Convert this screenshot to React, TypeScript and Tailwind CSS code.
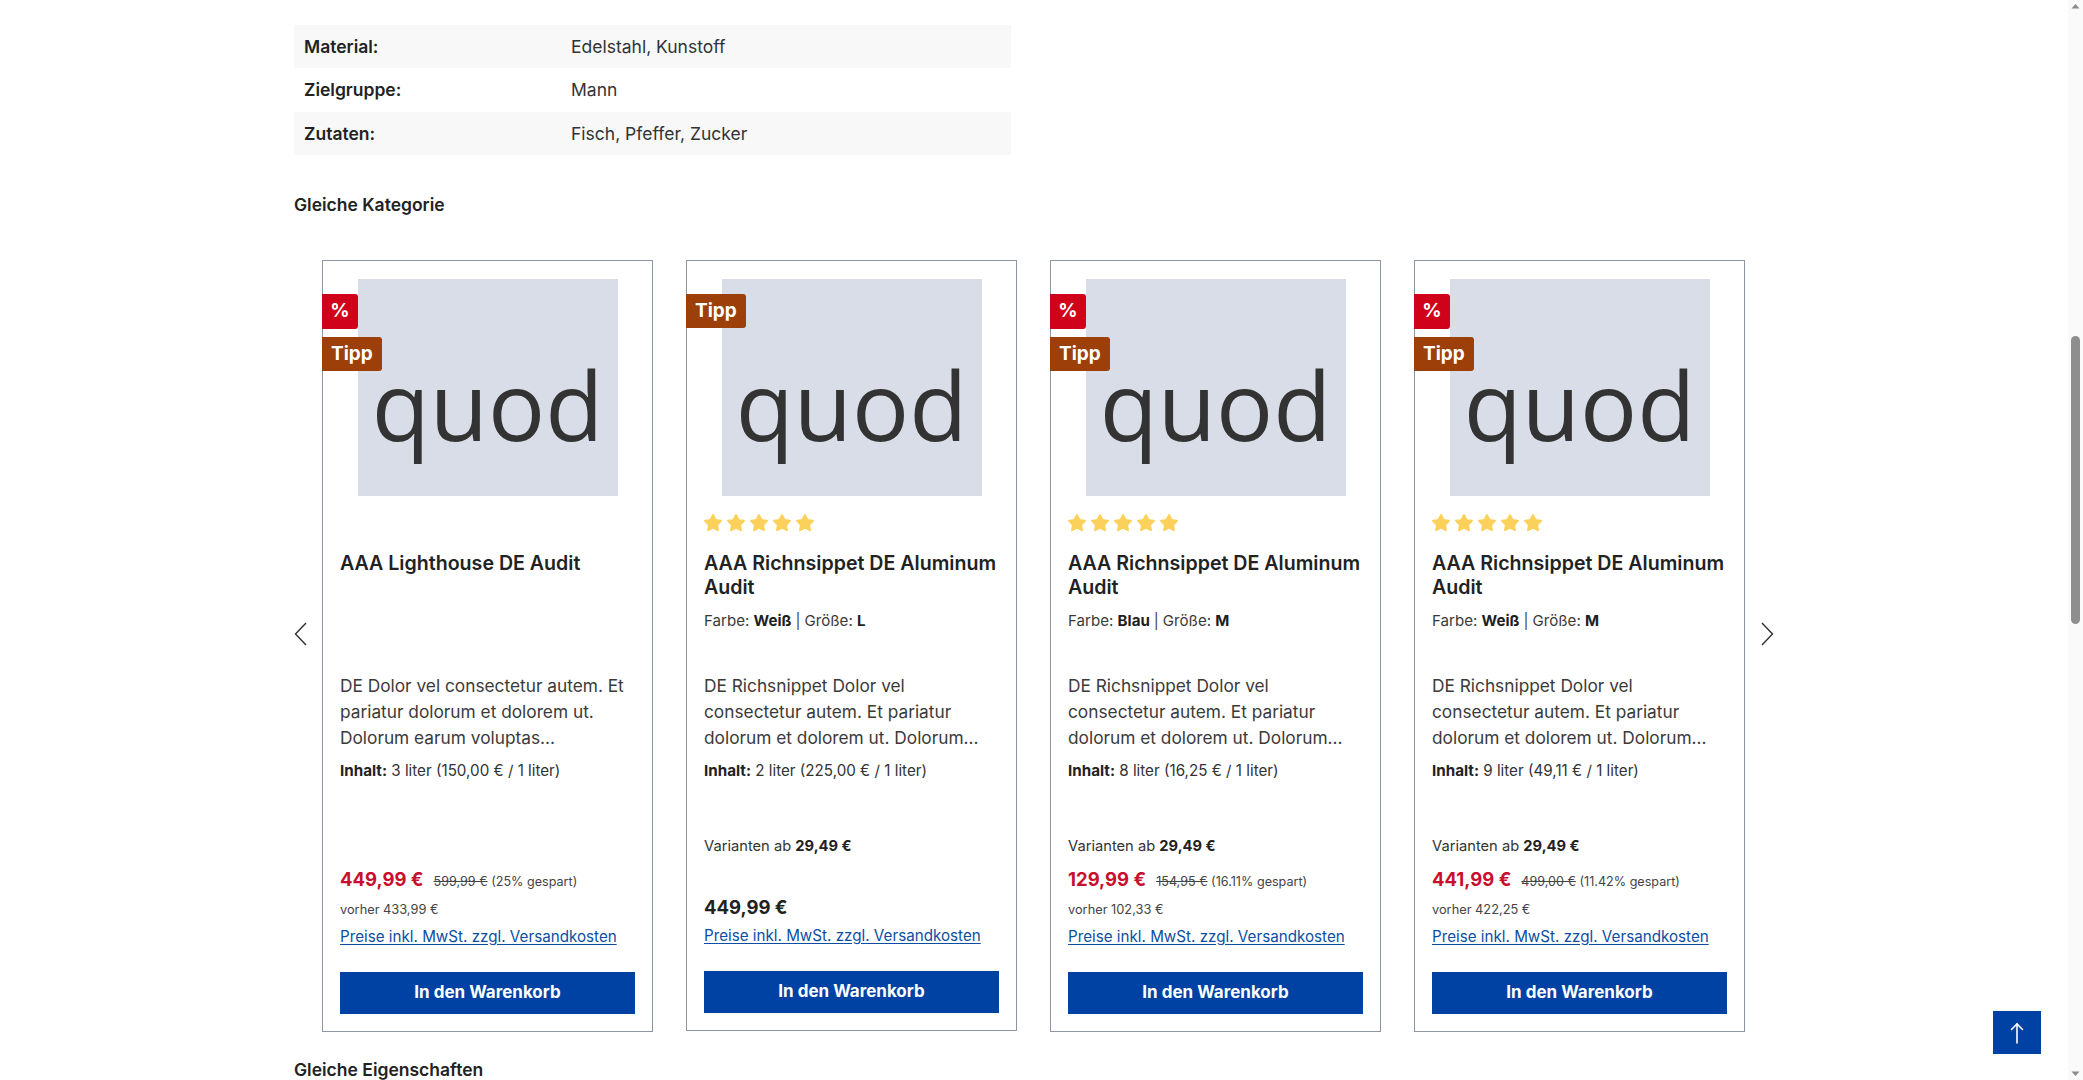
import React from "react";
import { Star } from "lucide-react";

type Sale = { old: string; saved: string; before: string };

type Product = {
  title: string;
  stars: boolean;
  variant?: { farbe: string; groesse: string };
  desc: string;
  inhalt: string;
  varianten?: string;
  price: string;
  sale?: Sale;
  badges: ("sale" | "tipp")[];
};

const specs: { label: string; value: string; h: string; bg: string }[] = [
  { label: "Material:", value: "Edelstahl, Kunstoff", h: "h-[43px]", bg: "bg-[#f8f8f8]" },
  { label: "Zielgruppe:", value: "Mann", h: "h-[44px]", bg: "bg-white" },
  { label: "Zutaten:", value: "Fisch, Pfeffer, Zucker", h: "h-[43px]", bg: "bg-[#f8f8f8]" },
];

const richDesc =
  "DE Richsnippet Dolor vel consectetur autem. Et pariatur dolorum et dolorem ut. Dolorum...";

const products: Product[] = [
  {
    title: "AAA Lighthouse DE Audit",
    stars: false,
    desc: "DE Dolor vel consectetur autem. Et pariatur dolorum et dolorem ut. Dolorum earum voluptas...",
    inhalt: "3 liter (150,00 € / 1 liter)",
    price: "449,99 €",
    sale: { old: "599,99 €", saved: "(25% gespart)", before: "vorher 433,99 €" },
    badges: ["sale", "tipp"],
  },
  {
    title: "AAA Richnsippet DE Aluminum Audit",
    stars: true,
    variant: { farbe: "Weiß", groesse: "L" },
    desc: richDesc,
    inhalt: "2 liter (225,00 € / 1 liter)",
    varianten: "29,49 €",
    price: "449,99 €",
    badges: ["tipp"],
  },
  {
    title: "AAA Richnsippet DE Aluminum Audit",
    stars: true,
    variant: { farbe: "Blau", groesse: "M" },
    desc: richDesc,
    inhalt: "8 liter (16,25 € / 1 liter)",
    varianten: "29,49 €",
    price: "129,99 €",
    sale: { old: "154,95 €", saved: "(16.11% gespart)", before: "vorher 102,33 €" },
    badges: ["sale", "tipp"],
  },
  {
    title: "AAA Richnsippet DE Aluminum Audit",
    stars: true,
    variant: { farbe: "Weiß", groesse: "M" },
    desc: richDesc,
    inhalt: "9 liter (49,11 € / 1 liter)",
    varianten: "29,49 €",
    price: "441,99 €",
    sale: { old: "499,00 €", saved: "(11.42% gespart)", before: "vorher 422,25 €" },
    badges: ["sale", "tipp"],
  },
];

function Chevron({ dir }: { dir: "left" | "right" }) {
  return (
    <svg width="13" height="24" viewBox="0 0 13 24" fill="none">
      <polyline
        points={dir === "left" ? "12,1 1.5,12 12,23" : "1,1 11.5,12 1,23"}
        stroke="#2f2f2f"
        strokeWidth="1.4"
        strokeLinejoin="miter"
      />
    </svg>
  );
}

function Stars() {
  return (
    <div className="flex h-[20px] gap-[3px] -ml-[1px]">
      {[0, 1, 2, 3, 4].map((i) => (
        <Star key={i} size={20} fill="#fcd15b" stroke="#fcd15b" strokeWidth={1.5} />
      ))}
    </div>
  );
}

function PriceLink({ className }: { className: string }) {
  return (
    <a
      className={`${className} h-[20px] text-[15.2px] leading-[20px] text-[#0c4ea3] underline underline-offset-[2px]`}
    >
      Preise inkl. MwSt. zzgl. Versandkosten
    </a>
  );
}

function ProductCard({ p }: { p: Product }) {
  return (
    <div className="relative flex w-[331px] shrink-0 flex-col border border-[#8d96a3] bg-white px-[17px] pt-[18px] pb-[17px]">
      {/* badges */}
      <div className="absolute left-[-1px] top-[33px] flex flex-col items-start gap-[8px]">
        {p.badges.includes("sale") && (
          <div className="flex h-[35px] w-[36px] items-center justify-center rounded-r-[3px] bg-[#d0021b] text-[19px] font-bold text-white">
            %
          </div>
        )}
        {p.badges.includes("tipp") && (
          <div className="flex h-[34px] items-center rounded-r-[3px] bg-[#9c3f08] px-[9px] text-[19px] font-bold text-white">
            Tipp
          </div>
        )}
      </div>

      {/* placeholder image */}
      <div className="mx-auto flex h-[217px] w-[260px] items-center justify-center bg-[#d8dde7] pt-[34px]">
        <span className="font-['Open_Sans',sans-serif] text-[95px] leading-none text-[#333333]">quod</span>
      </div>

      <div className="mt-[17px] h-[20px]">{p.stars && <Stars />}</div>

      <h3 className="mt-[18px] min-h-[48px] text-[19.6px] font-semibold leading-[24px] text-[#222222]">
        {p.title}
      </h3>

      <div className="mt-[12px] h-[20px] text-[15.1px] leading-[20px] text-[#3a3a3a]">
        {p.variant && (
          <>
            Farbe: <span className="font-bold text-[#1f1f1f]">{p.variant.farbe}</span>
            <span className="mx-[4px] text-[#444]">|</span>
            Größe: <span className="font-bold text-[#1f1f1f]">{p.variant.groesse}</span>
          </>
        )}
      </div>

      <p className="mt-[42px] h-[78px] text-[17.3px] leading-[26px] text-[#3a3a3a]">{p.desc}</p>

      <div className="mt-[10px] h-[20px] text-[15.2px] leading-[20px] text-[#333]">
        <span className="font-bold text-[#222]">Inhalt:</span> {p.inhalt}
      </div>

      <div className="mt-[55px] h-[20px] text-[14.7px] leading-[20px] text-[#333]">
        {p.varianten && (
          <>
            Varianten ab <span className="font-bold text-[#222]">{p.varianten}</span>
          </>
        )}
      </div>

      {p.sale ? (
        <>
          <div className="mt-[9px] flex h-[28px] items-baseline gap-[10px]">
            <span className="text-[18.5px] font-bold leading-[28px] text-[#c8102e]">{p.price}</span>
            <span className="text-[12.6px] leading-[28px] text-[#444]">
              <span className="line-through">{p.sale.old}</span> {p.sale.saved}
            </span>
          </div>
          <div className="mt-[9px] h-[16px] text-[12.8px] leading-[16px] text-[#444]">{p.sale.before}</div>
          <PriceLink className="mt-[9px]" />
        </>
      ) : (
        <>
          <div className="mt-[37px] h-[28px] text-[18.5px] font-bold leading-[28px] text-[#222]">{p.price}</div>
          <PriceLink className="mt-[5px]" />
        </>
      )}

      <button className="mt-[25px] flex h-[42px] w-full items-center justify-center bg-[#0042a3] text-[17px] font-bold text-white">
        In den Warenkorb
      </button>
    </div>
  );
}

function Scrollbar() {
  return (
    <div className="flex h-screen w-[15px] shrink-0 flex-col items-center bg-[#fafafa]">
      <svg className="mt-[3px]" width="9" height="6" viewBox="0 0 9 6">
        <polygon points="0.5,5.5 4.5,1 8.5,5.5" fill="#8a8a8a" />
      </svg>
      <div className="mt-[327px] h-[288px] w-[9px] rounded-full bg-[#8e8e8e]" />
      <svg className="mt-auto mb-[3px]" width="9" height="6" viewBox="0 0 9 6">
        <polygon points="0.5,0.5 8.5,0.5 4.5,5" fill="#8a8a8a" />
      </svg>
    </div>
  );
}

export default function App() {
  return (
    <div className="flex h-screen w-full overflow-hidden bg-white font-['Inter',sans-serif] text-[#222]">
      <main className="relative h-screen flex-1 overflow-hidden">
        <div className="mx-auto w-[1480px] pt-[25px]">
          {/* specs table */}
          <div className="w-[717px] text-[17.5px]">
            {specs.map((row) => (
              <div key={row.label} className={`flex items-center pt-[1px] ${row.h} ${row.bg}`}>
                <div className="w-[277px] pl-[10px] font-semibold text-[#222]">{row.label}</div>
                <div className="text-[#333]">{row.value}</div>
              </div>
            ))}
          </div>

          <h2 className="mt-[38px] text-[17.5px] font-semibold leading-[24px] text-[#222]">Gleiche Kategorie</h2>

          {/* product carousel */}
          <div className="mt-[43px] flex items-start">
            <button className="mt-[362px] flex w-[28px] shrink-0 justify-start" aria-label="Zurück">
              <Chevron dir="left" />
            </button>
            <div className="flex items-start gap-[33px]">
              {products.map((p, i) => (
                <ProductCard key={i} p={p} />
              ))}
            </div>
            <button className="mt-[362px] flex w-[29px] shrink-0 justify-end" aria-label="Weiter">
              <Chevron dir="right" />
            </button>
          </div>

          <h2 className="mt-[26px] text-[17.5px] font-semibold leading-[24px] text-[#222]">Gleiche Eigenschaften</h2>
        </div>

        {/* back to top */}
        <button
          className="absolute bottom-[26px] right-[27px] flex h-[43px] w-[48px] items-center justify-center bg-[#0042a3]"
          aria-label="Nach oben"
        >
          <svg width="24" height="24" viewBox="0 0 24 24" fill="none" stroke="white" strokeWidth="1.6" strokeLinecap="round">
            <path d="M12 22V3" />
            <path d="M6.5 8.5L12 3l5.5 5.5" />
          </svg>
        </button>
      </main>
      <Scrollbar />
    </div>
  );
}
